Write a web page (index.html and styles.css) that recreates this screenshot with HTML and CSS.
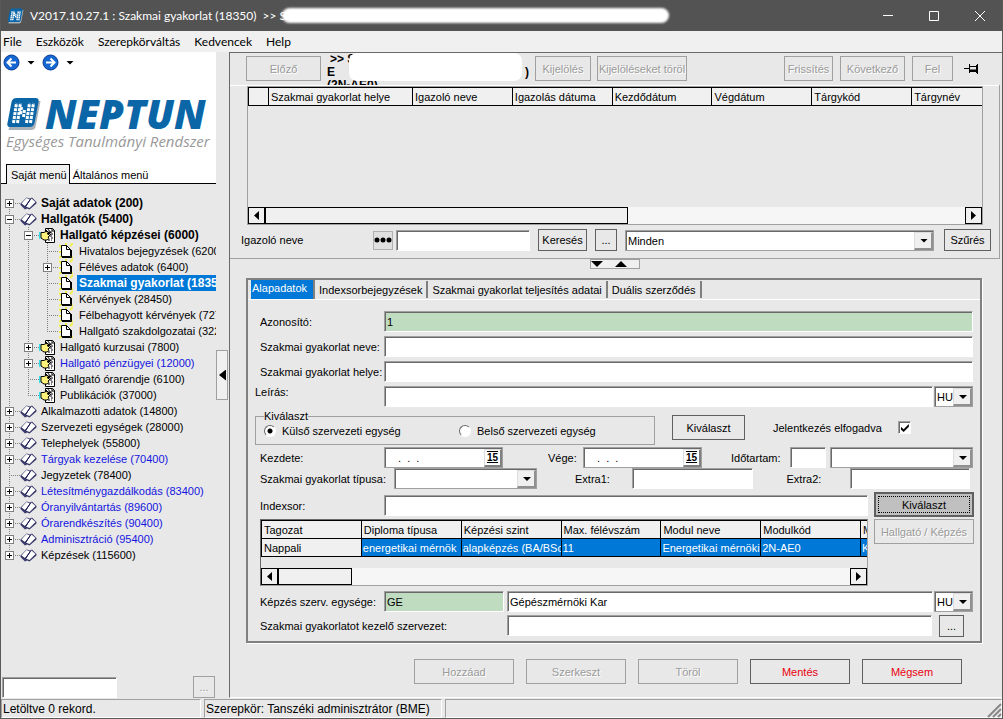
FILE: index.html
```html
<!DOCTYPE html>
<html lang="hu">
<head>
<meta charset="utf-8">
<title>Neptun - Szakmai gyakorlat</title>
<link rel="stylesheet" href="styles.css">
</head>
<body>
<svg class="defs" aria-hidden="true">
  <symbol id="i-book" viewBox="0 0 17 13">
    <path d="M.5 6.500 6.500.5 10 1.500 12 .5l4.500 4.500v1.500L9.500 12.500 7 11.500 5 12.500.5 8z" fill="#3a3a68"/>
    <path d="M1.500 6.500 6.500 1 10 2.500 5 9z" fill="#fff"/>
    <path d="M6 9.500 11.500 1.500l4 3.500-6 6z" fill="#fff"/>
    <path d="M10.500 2 5.500 9.500" stroke="#16164e" fill="none"/>
  </symbol>
  <symbol id="i-hand" viewBox="0 0 17 16">
    <path d="M6.500 1.500h7l2 2v12h-9z" fill="#fff" stroke="#000"/>
    <path d="M11 5h3M12 7h2M11 9h3M12 11h2M9 13h4" stroke="#000" stroke-dasharray="2 1"/>
    <path d="M13 1v3h3" stroke="#000" fill="none"/>
    <path d="M.5 5v7" stroke="#35e0e8" stroke-width="2"/>
    <path d="M2 5.500h3l2-1 4 1v1H8l3 2-2 1.500 1 1.500-2 1.500H5l-3-2z" fill="#fff27a" stroke="#000"/>
    <path d="M6 2 12 8M8 1l4 5" stroke="#000"/>
  </symbol>
  <symbol id="i-page" viewBox="0 0 14 16">
    <path d="M0 2 3 5M7 0v3M14 0l-3 3M0 9h3M13 9h-2M0 15l3-2M14 15l-3-2" stroke="#f4f04a" stroke-width="2"/>
    <path d="M2.500 2.500h5l4 4v7h-9z" fill="#fff" stroke="#000"/>
    <path d="M7.500 2.500v4h4" fill="none" stroke="#000"/>
    <path d="M3 14.500h9.500V7" fill="none" stroke="#000"/>
  </symbol>
  <symbol id="i-mark" viewBox="0 0 34 32">
    <path d="M8 3h25l-5 26q-1 3-4 3H1z" fill="#a8b0b8"/>
    <path d="M9 0h19q4 0 3 4l-4 21q-1 4-5 4H3q-4 0-3-4L4 4q1-4 5-4z" fill="#0b66a8"/>
    <path d="M6 25 9 5M10 25l3-20M14 9l-1 7M17 12l-1 7M19 25l3-20M23 25l3-20" stroke="#fff" stroke-width="3" stroke-dasharray="3 1" fill="none"/>
  </symbol>
</svg>

<header class="titlebar">
  <svg class="app-icon"><use href="#i-mark"/></svg>
  <h1>V2017.10.27.1 : Szakmai gyakorlat (18350) &nbsp;&gt;&gt; S</h1>
  <span class="smear"></span>
  <div class="win-buttons">
    <button aria-label="Kis méret"><svg width="12" height="12"><path d="M1 5.500h10" stroke="#fff"/></svg></button>
    <button aria-label="Teljes méret"><svg width="12" height="12"><path d="M1.500 1.500h9v9h-9z" stroke="#fff" fill="none"/></svg></button>
    <button aria-label="Bezárás"><svg width="12" height="12"><path d="m1 1 10 10M11 1 1 11" stroke="#fff"/></svg></button>
  </div>
</header>
<nav class="menubar"><a href="#">File</a><a href="#">Eszközök</a><a href="#">Szerepkörváltás</a><a href="#">Kedvencek</a><a href="#">Help</a></nav>

<div class="main">
  <aside class="sidebar">
    <div class="brand">
      <div class="history">
        <button aria-label="Vissza"><svg width="17" height="17"><circle cx="8.500" cy="8.500" r="7.500" fill="#1466d0" stroke="#0a3c96"/><path d="M13 8.500H5M8.500 4.500l-4 4 4 4" stroke="#fff" stroke-width="2" fill="none"/></svg></button>
        <i class="tri down"></i>
        <button aria-label="Előre"><svg width="17" height="17"><circle cx="8.500" cy="8.500" r="7.500" fill="#1466d0" stroke="#0a3c96"/><path d="M4 8.500h8M8.500 4.500l4 4-4 4" stroke="#fff" stroke-width="2" fill="none"/></svg></button>
        <i class="tri down"></i>
      </div>
      <div class="logo">
        <svg class="mark"><use href="#i-mark"/></svg>
        <span class="name">NEPTUN</span>
      </div>
      <p class="tagline">Egységes Tanulmányi Rendszer</p>
      <div class="menu-tabs"><button class="on">Saját menü</button><button>Általános menü</button></div>
    </div>
    <ul class="tree">
      <li class="bold"><span class="node first"><b class="box plus"></b></span><svg class="book"><use href="#i-book"/></svg><a href="#">Saját adatok (200)</a></li>
      <li class="bold"><span class="node"><b class="box"></b></span><svg class="book"><use href="#i-book"/></svg><a href="#">Hallgatók (5400)</a></li>
      <li class="bold"><span class="guide"></span><span class="node"><b class="box"></b></span><svg class="hand"><use href="#i-hand"/></svg><a href="#">Hallgató képzései (6000)</a></li>
      <li><span class="guide"></span><span class="guide"></span><span class="node"></span><svg class="page"><use href="#i-page"/></svg><a href="#">Hivatalos bejegyzések (6200)</a></li>
      <li><span class="guide"></span><span class="guide"></span><span class="node"><b class="box plus"></b></span><svg class="page"><use href="#i-page"/></svg><a href="#">Féléves adatok (6400)</a></li>
      <li class="bold current"><span class="guide"></span><span class="guide"></span><span class="node"></span><svg class="page"><use href="#i-page"/></svg><a href="#">Szakmai gyakorlat (18350)</a></li>
      <li><span class="guide"></span><span class="guide"></span><span class="node"></span><svg class="page"><use href="#i-page"/></svg><a href="#">Kérvények (28450)</a></li>
      <li><span class="guide"></span><span class="guide"></span><span class="node"></span><svg class="page"><use href="#i-page"/></svg><a href="#">Félbehagyott kérvények (72700)</a></li>
      <li><span class="guide"></span><span class="guide"></span><span class="node last"></span><svg class="page"><use href="#i-page"/></svg><a href="#">Hallgató szakdolgozatai (32250)</a></li>
      <li><span class="guide"></span><span class="node"><b class="box plus"></b></span><svg class="hand"><use href="#i-hand"/></svg><a href="#">Hallgató kurzusai (7800)</a></li>
      <li class="blue"><span class="guide"></span><span class="node"><b class="box plus"></b></span><svg class="hand"><use href="#i-hand"/></svg><a href="#">Hallgató pénzügyei (12000)</a></li>
      <li><span class="guide"></span><span class="node"></span><svg class="hand"><use href="#i-hand"/></svg><a href="#">Hallgató órarendje (6100)</a></li>
      <li><span class="guide"></span><span class="node last"></span><svg class="hand"><use href="#i-hand"/></svg><a href="#">Publikációk (37000)</a></li>
      <li><span class="node"><b class="box plus"></b></span><svg class="book"><use href="#i-book"/></svg><a href="#">Alkalmazotti adatok (14800)</a></li>
      <li><span class="node"><b class="box plus"></b></span><svg class="book"><use href="#i-book"/></svg><a href="#">Szervezeti egységek (28000)</a></li>
      <li><span class="node"><b class="box plus"></b></span><svg class="book"><use href="#i-book"/></svg><a href="#">Telephelyek (55800)</a></li>
      <li class="blue"><span class="node"><b class="box plus"></b></span><svg class="book"><use href="#i-book"/></svg><a href="#">Tárgyak kezelése (70400)</a></li>
      <li><span class="node"></span><svg class="book"><use href="#i-book"/></svg><a href="#">Jegyzetek (78400)</a></li>
      <li class="blue"><span class="node"><b class="box plus"></b></span><svg class="book"><use href="#i-book"/></svg><a href="#">Létesítménygazdálkodás (83400)</a></li>
      <li class="blue"><span class="node"><b class="box plus"></b></span><svg class="book"><use href="#i-book"/></svg><a href="#">Óranyilvántartás (89600)</a></li>
      <li class="blue"><span class="node"><b class="box plus"></b></span><svg class="book"><use href="#i-book"/></svg><a href="#">Órarendkészítés (90400)</a></li>
      <li class="blue"><span class="node"><b class="box plus"></b></span><svg class="book"><use href="#i-book"/></svg><a href="#">Adminisztráció (95400)</a></li>
      <li><span class="node last"><b class="box plus"></b></span><svg class="book"><use href="#i-book"/></svg><a href="#">Képzések (115600)</a></li>
    </ul>
    <div class="side-search"><input type="text" aria-label="Menü keresése"><button class="btn small" disabled>...</button></div>
  </aside>
  <div class="divider"><button aria-label="Menü elrejtése"><i class="tri left"></i></button></div>

  <main class="work">
    <div class="toolbar">
      <button class="btn prev" disabled>Előző</button>
      <div class="context"><p class="lead">&gt;&gt; S</p><p class="wide"><span>E</span><span>)</span></p><p>(2N-AE0)</p><span class="patch"></span></div>
      <button class="btn pick" disabled>Kijelölés</button>
      <button class="btn clear" disabled>Kijelöléseket töröl</button>
      <span class="grow"></span>
      <button class="btn refresh" disabled>Frissítés</button>
      <button class="btn next" disabled>Következő</button>
      <button class="btn up" disabled>Fel</button>
      <button class="pin" aria-label="Rögzítés"><svg width="16" height="12"><path d="M0 5.500h5M5.500 1v9M6 3.500h6M6 8.500h6M13.500 1v10M12.500 2v8" stroke="#000" fill="none"/><path d="M6 6.500h6v2H6z"/></svg></button>
    </div>

    <section class="list-panel">
      <div class="grid top-grid">
        <div class="clip">
          <table class="wide-table">
            <thead><tr><th class="sel"></th><th class="place">Szakmai gyakorlat helye</th><th>Igazoló neve</th><th>Igazolás dátuma</th><th>Kezdődátum</th><th>Végdátum</th><th>Tárgykód</th><th>Tárgynév</th></tr></thead>
          </table>
        </div>
        <div class="scroll"><button aria-label="Balra"><i class="tri left"></i></button><span class="thumb long"></span><span class="track"></span><button aria-label="Jobbra"><i class="tri right"></i></button></div>
      </div>
      <div class="filter">
        <label for="igazolo">Igazoló neve</label>
        <button class="dots" aria-label="Feltétel"><svg width="18" height="6"><circle cx="3" cy="3" r="2.500"/><circle cx="9" cy="3" r="2.500"/><circle cx="15" cy="3" r="2.500"/></svg></button>
        <input type="text" id="igazolo">
        <button class="btn search">Keresés</button>
        <button class="btn small">...</button>
        <span class="combo"><select aria-label="Szűrő"><option>Minden</option></select></span>
        <button class="btn narrow">Szűrés</button>
      </div>
    </section>
    <div class="collapse"><button aria-label="Méretezés"><i class="tri down"></i><i class="tri up"></i></button></div>

    <section class="detail">
      <div class="tabs"><button class="on">Alapadatok</button><button>Indexsorbejegyzések</button><button>Szakmai gyakorlat teljesítés adatai</button><button>Duális szerződés</button></div>
      <form class="form">
        <div class="row"><label for="azon">Azonosító:</label><input class="green" id="azon" value="1" readonly></div>
        <div class="row"><label for="neve">Szakmai gyakorlat neve:</label><input id="neve"></div>
        <div class="row"><label for="helye">Szakmai gyakorlat helye:</label><input id="helye"></div>
        <div class="row desc"><label for="leiras">Leírás:</label><input id="leiras"><span class="combo lang"><select aria-label="Leírás nyelve"><option>HU</option></select></span></div>
        <div class="choice">
          <fieldset><legend>Kiválaszt</legend>
            <label><input type="radio" name="unit" checked>Külső szervezeti egység</label>
            <label><input type="radio" name="unit">Belső szervezeti egység</label>
          </fieldset>
          <button type="button" class="btn choose">Kiválaszt</button>
          <label class="accept">Jelentkezés elfogadva<input type="checkbox" checked></label>
        </div>
        <div class="row dates">
          <label for="kezdete">Kezdete:</label><span class="date"><input id="kezdete" value=".  .  ."><button type="button" aria-label="Kezdete naptár">15</button></span>
          <label class="end" for="vege">Vége:</label><span class="date"><input id="vege" value=".  .  ."><button type="button" aria-label="Vége naptár">15</button></span>
          <label class="span" for="ido">Időtartam:</label><input class="num" id="ido"><span class="combo unit"><select aria-label="Időtartam egysége"><option></option></select></span>
        </div>
        <div class="row extras">
          <label for="tipus">Szakmai gyakorlat típusa:</label><span class="combo kind"><select id="tipus"><option></option></select></span>
          <label class="ex1" for="extra1">Extra1:</label><input id="extra1">
          <label class="ex2" for="extra2">Extra2:</label><input id="extra2">
        </div>
        <div class="index">
          <div class="index-main">
            <div class="row"><label for="indexsor">Indexsor:</label><input id="indexsor"></div>
            <div class="grid">
              <div class="clip">
                <table>
                  <thead><tr><th>Tagozat</th><th>Diploma típusa</th><th>Képzési szint</th><th>Max. félévszám</th><th>Modul neve</th><th>Modulkód</th><th>Modul típusa</th></tr></thead>
                  <tbody><tr><td>Nappali</td><td>energetikai mérnök</td><td>alapképzés (BA/BSc)</td><td>11</td><td>Energetikai mérnöki</td><td>2N-AE0</td><td>Képzés</td></tr></tbody>
                </table>
              </div>
              <div class="scroll"><button type="button" aria-label="Balra"><i class="tri left"></i></button><span class="thumb"></span><span class="track"></span><button type="button" aria-label="Jobbra"><i class="tri right"></i></button></div>
            </div>
          </div>
          <div class="index-actions"><button type="button" class="btn focus">Kiválaszt</button><button type="button" class="btn" disabled>Hallgató / Képzés</button></div>
        </div>
        <div class="row unit-row"><label for="kod">Képzés szerv. egysége:</label><input class="green code" id="kod" value="GE" readonly><input value="Gépészmérnöki Kar" aria-label="Szervezeti egység neve"><span class="combo lang"><select aria-label="Egység nyelve"><option>HU</option></select></span></div>
        <div class="row org"><label for="szerv">Szakmai gyakorlatot kezelő szervezet:</label><input id="szerv"><button type="button" class="btn small">...</button></div>
      </form>
    </section>

    <div class="actions">
      <button class="btn" disabled>Hozzáad</button><button class="btn" disabled>Szerkeszt</button><button class="btn" disabled>Töröl</button><button class="btn red">Mentés</button><button class="btn red">Mégsem</button>
    </div>
  </main>
</div>
<footer class="status"><span class="records">Letöltve 0 rekord.</span><span class="role">Szerepkör: Tanszéki adminisztrátor (BME)</span><span class="rest"></span><svg class="grip"><path d="M1 14 14 1M6 14l8-8M11 14l3-3" stroke="#888" stroke-width="2"/></svg></footer>
</body>
</html>
```

FILE: styles.css
```css
* { box-sizing: border-box; }
body {
  margin: 0;
  min-height: 100vh;
  display: flex;
  flex-direction: column;
  background: #e8e8e8;
  border: solid #5a5a5a;
  border-width: 0 1px 1px;
  font: 11px/14px "Liberation Sans", Arial, sans-serif;
  color: #000;
  overflow: hidden;
}
button, input, select { font: inherit; color: inherit; margin: 0; padding: 0; border: 0; border-radius: 0; background: none; }
a { color: inherit; text-decoration: none; }
p { margin: 0; }
.defs { display: none; }
.grow { flex: 1; }

.titlebar { height: 31px; flex: none; display: flex; align-items: center; background: #535353; color: #fff; padding-left: 8px; margin: 0 -1px; }
.app-icon { width: 16px; height: 16px; margin-right: 6px; }
.titlebar h1 { margin: 0; font: 400 12px/16px Lato, sans-serif; white-space: nowrap; }
.smear { flex: 0 0 387px; height: 15px; margin-left: -4px; border-radius: 8px; background: #fff; filter: blur(1px); }
.win-buttons { display: flex; margin-left: auto; }
.win-buttons button { width: 46px; height: 30px; padding-top: 3px; }

.menubar { height: 21px; flex: none; display: flex; gap: 14px; align-items: center; padding-left: 2px; background: #f0f0f0; font: 12px/16px Lato, sans-serif; }

.main { flex: 1; display: flex; min-height: 0; }
.sidebar { width: 215px; flex: none; display: flex; flex-direction: column; }
.brand { background: #fff; display: flex; flex-direction: column; }
.history { display: flex; align-items: center; gap: 7px; padding: 1px 0 0 2px; height: 20px; }
.history button { height: 17px; }
.tri { display: block; flex: none; background: #000; }
.tri.down { width: 8px; height: 4px; clip-path: polygon(0 0, 100% 0, 50% 100%); }
.tri.up { width: 12px; height: 6px; clip-path: polygon(0 100%, 100% 100%, 50% 0); }
.tri.left { width: 5px; height: 9px; clip-path: polygon(100% 0, 100% 100%, 0 50%); }
.tri.right { width: 5px; height: 9px; clip-path: polygon(0 0, 0 100%, 100% 50%); }
.logo { display: flex; align-items: center; gap: 3px; padding-left: 6px; margin-top: 24px; height: 36px; }
.mark { width: 35px; height: 32px; flex: none; }
.name { font: italic 800 40px/36px "Open Sans", sans-serif; color: #0b66a8; }
.tagline { font: italic 15px/18px "Open Sans", sans-serif; color: #999; padding-left: 5px; white-space: nowrap; }
.menu-tabs { display: flex; margin-top: 14px; height: 20px; padding-left: 5px; border-bottom: 1px solid #000; }
.menu-tabs button { padding: 2px 3px 0; height: 19px; }
.menu-tabs .on { background: #f0f0f0; border: solid #000; border-width: 1px 1px 0; height: 20px; padding: 1px 2px 0 4px; }

.tree { list-style: none; margin: 0; padding: 11px 0 0; overflow: hidden; }
.tree li { display: flex; align-items: center; height: 16px; white-space: nowrap; }
.tree svg { flex: none; }
.guide, .node { flex: none; width: 19px; height: 16px; }
.guide, .node { background: repeating-linear-gradient(#808080 0 1px, transparent 1px 2px) 8px 0 / 1px 16px no-repeat; }
.node { position: relative; display: grid; align-items: center; padding-left: 4px; }
.node::after { content: ""; position: absolute; left: 8px; top: 8px; width: 11px; border-top: 1px dotted #808080; }
.node.last { background-size: 1px 8px; }
.node.first { background-position: 8px 8px; }
.box { position: relative; z-index: 1; width: 9px; height: 9px; border: 1px solid #808080; background: linear-gradient(#000, #000) center / 5px 1px no-repeat, #fff; }
.box.plus { background: linear-gradient(#000, #000) center / 5px 1px no-repeat, linear-gradient(#000, #000) center / 1px 5px no-repeat, #fff; }
.book { width: 17px; height: 13px; margin-right: 2px; }
.hand { width: 17px; height: 16px; margin-right: 2px; }
.page { width: 14px; height: 16px; margin: 0 4px 0 1px; }
.tree a { padding: 0 2px; height: 16px; line-height: 16px; }
.bold a { font-weight: 700; font-size: 12px; }
.blue a { color: #1414e0; }
.current a { background: #0078d7; color: #fff; }
.side-search { margin-top: auto; display: flex; justify-content: space-between; align-items: end; padding: 0 1px; }
.side-search input { width: 115px; }

.divider { width: 13px; flex: none; display: flex; padding-top: 298px; }
.divider button { width: 12px; height: 50px; background: #f0f0f0; border: 1px solid #a0a0a0; display: grid; place-content: center end; padding-right: 1px; }
.divider .tri { width: 7px; height: 11px; }

.work { flex: 1; min-width: 0; display: flex; flex-direction: column; border-left: 1px solid #696969; border-top: 1px solid #696969; border-bottom: 1px solid #fff; padding-right: 2px; }
.btn { height: 25px; border: 1px solid #606060; text-align: center; white-space: nowrap; flex: none; }
.btn:disabled { color: #9a9a9a; border-color: #a0a0a0; text-shadow: 1px 1px #fff; }
.btn.small { width: 22px; height: 22px; }
.btn.red { color: #e80010; }

.toolbar { display: flex; align-items: center; height: 32px; padding: 0 20px 1px 16px; }
.prev { width: 75px; }
.context { position: relative; align-self: start; width: 202px; height: 32px; margin: 0 6px; overflow: hidden; font-weight: 700; font-size: 12px; line-height: 13px; flex: none; }
.lead { padding-left: 3px; }
.wide { display: flex; justify-content: space-between; }
.patch { position: absolute; left: 22px; right: 7px; top: 0; height: 28px; background: #fff; border-radius: 8px; }
.pick { width: 56px; margin-right: 6px; }
.clear { width: 90px; }
.refresh { width: 49px; margin-right: 7px; }
.next { width: 65px; margin-right: 7px; }
.up { width: 41px; margin-right: 11px; }
.pin { height: 12px; display: grid; }

.list-panel { border: 1px solid #a0a0a0; border-width: 0 1px 1px 0; box-shadow: inset 0 1px #fff; padding: 1px 8px 7px 11px; }
.grid { border: 1px solid #a0a0a0; display: flex; flex-direction: column; }
.top-grid { margin: 0 8px 0 6px; height: 139px; }
.clip { overflow: hidden; flex: 1; }
table { table-layout: fixed; width: 700px; border-collapse: collapse; }
.wide-table { width: 764px; }
th, td { border: 1px solid #000; height: 18px; padding: 0 2px; text-align: left; font-weight: 400; white-space: nowrap; overflow: hidden; background: #f0f0f0; line-height: 16px; }
td + td { background: #0078d7; color: #fff; padding: 0 1px; }
.sel { width: 20px; }
.place { width: 144px; }
.scroll { display: flex; height: 17px; flex: none; background: #f6f6f6; }
.scroll button, .thumb { width: 17px; border: 1px solid #000; background: #f0f0f0; display: grid; place-content: center; flex: none; }
.thumb { width: 74px; }
.thumb.long { flex: 0 1 363px; }
.track { flex: 1; }

input, select { height: 21px; min-width: 0; background: #fff; padding: 0 2px; }
input { border: 1px solid; border-color: #a0a0a0 #fff #fff #a0a0a0; box-shadow: inset 1px 1px #696969; }
.filter { display: flex; align-items: center; padding-top: 4px; }
.filter label { width: 132px; flex: none; }
.filter .dots { width: 20px; height: 19px; border: 1px solid #b0b0b0; background: #e0e0e0; display: grid; place-content: center; margin-right: 3px; }
.filter input { flex: 0 1 134px; margin-right: 8px; }
.search { width: 49px; height: 22px; margin-right: 8px; }
.filter .combo { flex: 1; margin: 0 10px 0 8px; }
.narrow { width: 47px; height: 22px; }
.combo, .date { display: flex; height: 21px; background: #fff; border: 1px solid #a0a0a0; box-shadow: inset 1px 1px #696969; padding: 1px 0 0 1px; }
.combo { position: relative; }
.combo select { width: 100%; height: 18px; appearance: none; border: 0; padding: 0 1px; }
.combo::before { content: ""; position: absolute; right: 0; top: 1px; bottom: 0; width: 16px; background: #f0f0f0; border: solid; border-width: 1px 2px 2px 1px; border-color: #ddd #909090 #909090 #ddd; pointer-events: none; }
.combo::after { content: ""; position: absolute; right: 5px; top: 8px; width: 8px; height: 4px; background: #000; clip-path: polygon(0 0, 100% 0, 50% 100%); pointer-events: none; }

.collapse { display: flex; justify-content: center; height: 19px; padding-right: 1px; }
.collapse button { width: 50px; height: 10px; border: 1px solid #a0a0a0; background: #f0f0f0; display: flex; justify-content: center; align-items: center; gap: 12px; }
.collapse .down { width: 12px; height: 6px; }

.detail { margin: 0 18px 0 16px; border: 2px solid #808080; box-shadow: 1px 1px #fff; }
.tabs { display: flex; align-items: center; height: 20px; padding-left: 3px; border-bottom: 1px solid #fff; }
.tabs button { height: 17px; padding: 2px 4px 0; border-right: 2px solid #808080; line-height: 15px; white-space: nowrap; }
.tabs .on { background: #0078d7; color: #fff; height: 19px; padding: 0 6px 3px 1px; }
.form { padding: 11px 7px 5px 12px; display: flex; flex-direction: column; }
.row { display: flex; align-items: center; height: 21px; margin-bottom: 4px; }
.row > label:first-child { width: 124px; flex: none; white-space: nowrap; }
.row > input { flex: 1; }
.green { background: #c0dcc0; }
.lang { width: 39px; margin-left: 1px; flex: none; }
.desc { margin-left: -5px; }
.desc > label:first-child { width: 129px; padding-bottom: 10px; }
.choice { display: flex; align-items: center; margin: 0 0 3px -5px; height: 33px; }
fieldset { margin: 0 17px 0 0; padding: 0 8px; border: 1px solid #a0a0a0; flex: 0 1 400px; min-width: 0; height: 35px; display: flex; }
legend { padding: 0; line-height: 12px; }
fieldset label { display: flex; align-items: center; height: 18px; flex: none; width: 195px; white-space: nowrap; }
fieldset label:last-child { width: auto; }
input[type=radio] { appearance: none; flex: none; width: 12px; height: 12px; margin-right: 6px; border: 1px solid #fff; border-top-color: #696969; border-left-color: #696969; border-radius: 50%; padding: 0; box-shadow: none; }
input[type=radio]:checked { background: radial-gradient(circle, #000 2px, #fff 3px); }
.choose { width: 73px; }
.accept { display: flex; align-items: center; margin-left: 28px; gap: 16px; white-space: nowrap; }
input[type=checkbox] { appearance: none; width: 13px; height: 13px; padding: 0; display: grid; }
input[type=checkbox]:checked::after { content: ""; width: 8px; height: 8px; margin: 2px; background: #000; clip-path: polygon(0 35%, 35% 65%, 100% 0, 100% 35%, 35% 100%, 0 70%); }
.dates { margin-bottom: 0; }
.date { width: 119px; flex: none; }
.date input { flex: 1; height: 18px; border: 0; padding-left: 12px; white-space: pre; box-shadow: none; }
.date button { width: 18px; border: solid; border-width: 1px 2px 2px 1px; border-color: #ddd #808080 #808080 #ddd; background: #fff; font-size: 10px; line-height: 13px; font-weight: 700; text-decoration: underline overline; }
.end { margin-left: 45px; width: 35px; }
.span { margin-left: 29px; width: 59px; }
.row .num { flex: 0 0 36px; margin-right: 4px; }
.unit { flex: 1; }
.extras { margin-bottom: 3px; padding-right: 3px; }
.extras > label:first-child { width: 134px; }
.kind { width: 143px; flex: none; }
.ex1 { margin-left: 38px; width: 57px; }
.ex2 { margin-left: 34px; width: 63px; }
.index { display: flex; gap: 6px; margin-bottom: 5px; margin-right: -1px; }
.index-main { flex: 1; min-width: 0; padding-top: 3px; }
.index-main .row { margin-bottom: 3px; }
.index-main .grid { height: 67px; border-color: #696969 #a0a0a0 #a0a0a0 #696969; }
.index-actions { width: 100px; flex: none; display: flex; flex-direction: column; gap: 2px; }
.btn.focus { border: 2px solid #606060; background: #c0c0c0; outline: 1px dotted #000; outline-offset: -5px; }
.unit-row { margin-bottom: 3px; }
.row .code { flex: 0 0 120px; margin-right: 3px; }
.org { margin-bottom: 0; }
.org > label:first-child { width: 247px; }
.org .btn { width: 25px; margin: 0 9px 0 7px; }

.actions { display: flex; justify-content: flex-end; gap: 12px; padding: 16px 38px 13px 0; margin-top: auto; }
.actions .btn { width: 100px; }

.status { display: flex; gap: 3px; height: 19px; flex: none; margin-top: 1px; font-size: 12px; line-height: 18px; }
.status span { border: 1px solid #fff; border-top-color: #a0a0a0; border-left-color: #a0a0a0; white-space: nowrap; padding-left: 1px; }
.records { width: 200px; }
.role { width: 238px; }
.rest { flex: 1; }
.grip { width: 15px; height: 15px; align-self: end; margin-left: -18px; }
```
